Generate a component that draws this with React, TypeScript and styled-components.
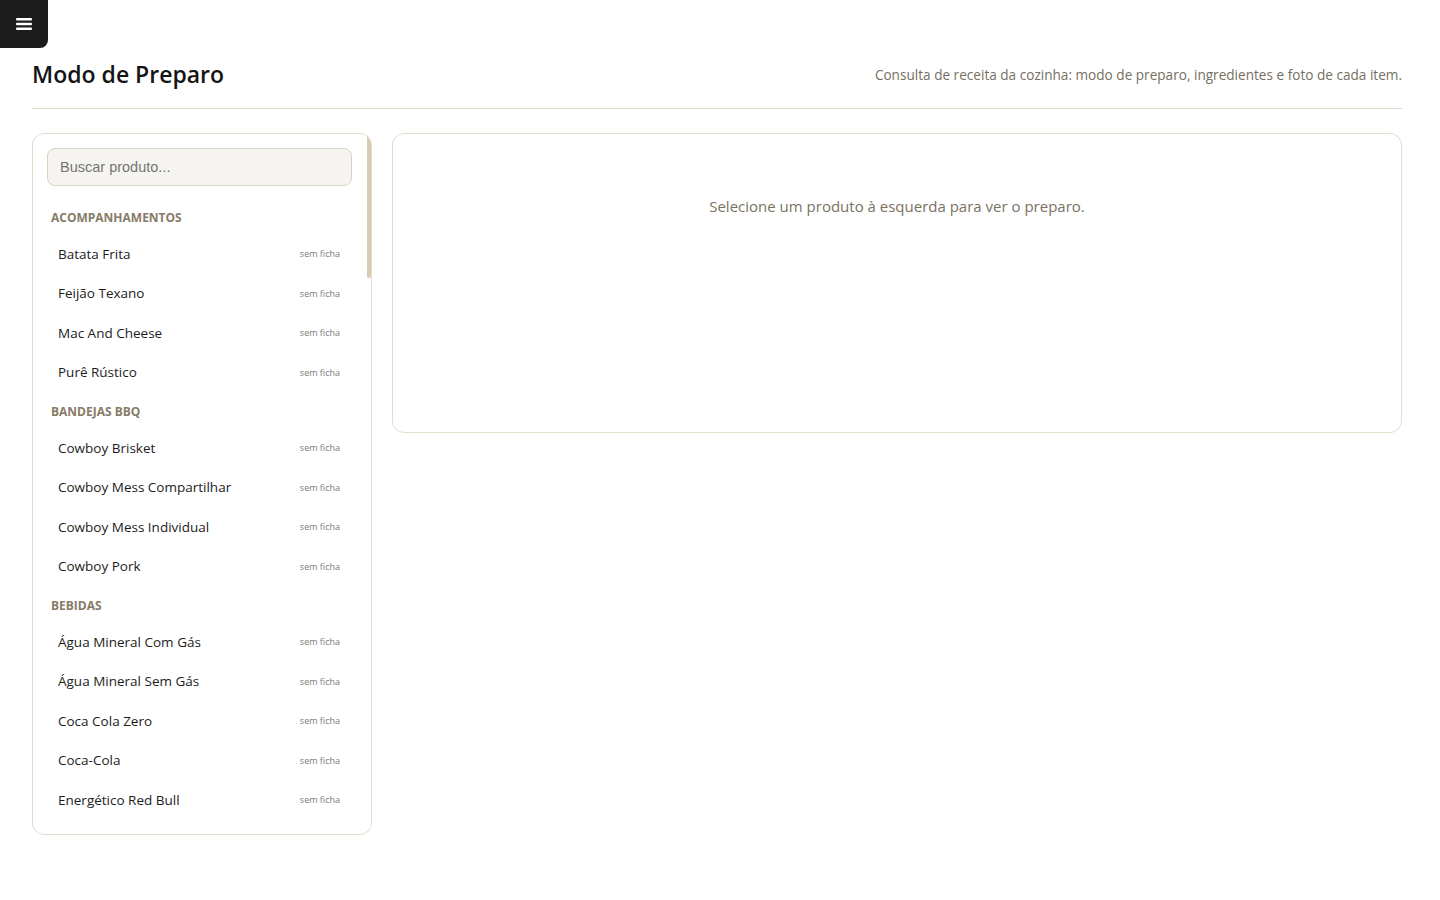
import styled, { createGlobalStyle } from 'styled-components'

const GlobalStyle = createGlobalStyle`
  html, body {
    margin: 0;
    padding: 0;
    background: #ffffff;
    font-family: 'Open Sans', 'Noto Sans', sans-serif;
    color: #1c1c1c;
  }
  * {
    box-sizing: border-box;
  }
`

const MenuButton = styled.button`
  position: fixed;
  top: 0;
  left: 0;
  width: 48px;
  height: 48px;
  border: none;
  border-radius: 0 0 8px 0;
  background: #1d1d1d;
  display: flex;
  align-items: center;
  justify-content: center;
  padding: 0;
  cursor: pointer;
`

const Page = styled.main`
  padding: 56px 38px 0 32px;
`

const Header = styled.header`
  display: flex;
  align-items: center;
  justify-content: space-between;
  padding-bottom: 16px;
  border-bottom: 1px solid #ddd9c6;
`

const Title = styled.h1`
  margin: 0;
  font-size: 23px;
  font-weight: 600;
  color: #141414;
  line-height: 36px;
`

const Subtitle = styled.p`
  margin: 0;
  font-size: 13.6px;
  color: #75705f;
`

const Body = styled.div`
  display: flex;
  align-items: flex-start;
  gap: 20px;
  margin-top: 24px;
`

const SidebarFrame = styled.aside`
  position: relative;
  flex: 0 0 340px;
  height: 702px;
  border: 1px solid #e2decd;
  border-radius: 12px;
  overflow: hidden;

  /* scroll thumb drawn over the edge (native bars are hidden in capture) */
  &::after {
    content: '';
    position: absolute;
    top: -1px;
    right: 0;
    width: 4px;
    height: 145px;
    border-radius: 0 0 2px 2px;
    background: #d9ccae;
  }
`

const SidebarScroll = styled.div`
  height: 100%;
  overflow-y: auto;
  padding: 14px 19px 14px 14px;
  scrollbar-width: none;

  &::-webkit-scrollbar {
    display: none;
  }
`

const Search = styled.input`
  display: block;
  width: 100%;
  height: 38px;
  margin-bottom: 12px;
  border: 1px solid #d8d3c2;
  border-radius: 8px;
  background: #f5f4f1;
  padding: 0 12px;
  font-family: 'Liberation Sans', Arial, sans-serif;
  font-size: 14.5px;
  color: #333;
  outline: none;

  &::placeholder {
    color: #757575;
  }
`

const Category = styled.h3`
  margin: 0;
  padding: 12px 4px 8px;
  font-size: 12px;
  font-weight: 700;
  color: #877b67;
  text-transform: uppercase;
  line-height: 16px;
`

const Item = styled.button`
  display: flex;
  width: 100%;
  align-items: center;
  justify-content: space-between;
  height: 39.5px;
  padding: 0 12px 0 11px;
  border: none;
  background: transparent;
  border-radius: 8px;
  font-family: inherit;
  cursor: pointer;
  text-align: left;

  &:hover {
    background: #f7f5ef;
  }
`

const ItemName = styled.span`
  font-size: 13.5px;
  color: #1c1c1c;
`

const ItemTag = styled.span`
  font-size: 9px;
  color: #7a7a7a;
`

const Detail = styled.section`
  flex: 1;
  height: 300px;
  border: 1px solid #e2decd;
  border-radius: 12px;
  display: flex;
  justify-content: center;
  padding-top: 62px;
`

const Empty = styled.p`
  margin: 0;
  font-size: 15px;
  color: #7a7262;
`

const MenuIcon = () => (
  <svg width="16" height="14" viewBox="0 0 16 14" fill="#ffffff">
    <rect x="0" y="1" width="16" height="2.6" rx="1" />
    <rect x="0" y="5.7" width="16" height="2.6" rx="1" />
    <rect x="0" y="10.4" width="16" height="2.6" rx="1" />
  </svg>
)

const groups: { name: string; items: string[] }[] = [
  { name: 'Acompanhamentos', items: ['Batata Frita', 'Feijão Texano', 'Mac And Cheese', 'Purê Rústico'] },
  { name: 'Bandejas BBQ', items: ['Cowboy Brisket', 'Cowboy Mess Compartilhar', 'Cowboy Mess Individual', 'Cowboy Pork'] },
  {
    name: 'Bebidas',
    items: [
      'Água Mineral Com Gás',
      'Água Mineral Sem Gás',
      'Coca Cola Zero',
      'Coca-Cola',
      'Energético Red Bull',
      'Fanta Laranja',
      'Guaraná Antarctica',
      'Limonada Suíça',
      'Suco de Laranja',
      'Chá Gelado',
      'Cerveja Artesanal IPA',
      'Cerveja Pilsen',
    ],
  },
  { name: 'Burgers', items: ['Bacon Burger', 'BBQ Burger', 'Cheddar Burger', 'Classic Burger', 'Smash Duplo', 'Texas Burger'] },
  { name: 'Carnes', items: ['Brisket', 'Costela Suína', 'Pulled Pork', 'Linguiça Defumada', 'Frango Defumado', 'Picanha'] },
  { name: 'Entradas', items: ['Anéis de Cebola', 'Asinhas BBQ', 'Nachos', 'Pão de Alho', 'Dadinho de Tapioca'] },
  { name: 'Molhos', items: ['Barbecue Clássico', 'Chimichurri', 'Maionese Defumada', 'Mostarda e Mel'] },
  { name: 'Sanduíches', items: ['Sanduíche de Brisket', 'Sanduíche de Pulled Pork', 'Sanduíche de Frango', 'Cubano'] },
  { name: 'Sobremesas', items: ['Brownie', 'Cheesecake', 'Petit Gateau', 'Pudim', 'Torta de Limão', 'Sorvete'] },
  { name: 'Saladas', items: ['Coleslaw', 'Salada Caesar', 'Salada Verde', 'Salada de Batata'] },
]

const App = () => (
  <>
    <GlobalStyle />
    <MenuButton aria-label="Menu">
      <MenuIcon />
    </MenuButton>
    <Page>
      <Header>
        <Title>Modo de Preparo</Title>
        <Subtitle>Consulta de receita da cozinha: modo de preparo, ingredientes e foto de cada item.</Subtitle>
      </Header>
      <Body>
        <SidebarFrame>
          <SidebarScroll>
            <Search placeholder="Buscar produto..." />
            {groups.map((group) => (
              <div key={group.name}>
                <Category>{group.name}</Category>
                {group.items.map((item) => (
                  <Item key={item}>
                    <ItemName>{item}</ItemName>
                    <ItemTag>sem ficha</ItemTag>
                  </Item>
                ))}
              </div>
            ))}
          </SidebarScroll>
        </SidebarFrame>
        <Detail>
          <Empty>Selecione um produto à esquerda para ver o preparo.</Empty>
        </Detail>
      </Body>
    </Page>
  </>
)

export default App
